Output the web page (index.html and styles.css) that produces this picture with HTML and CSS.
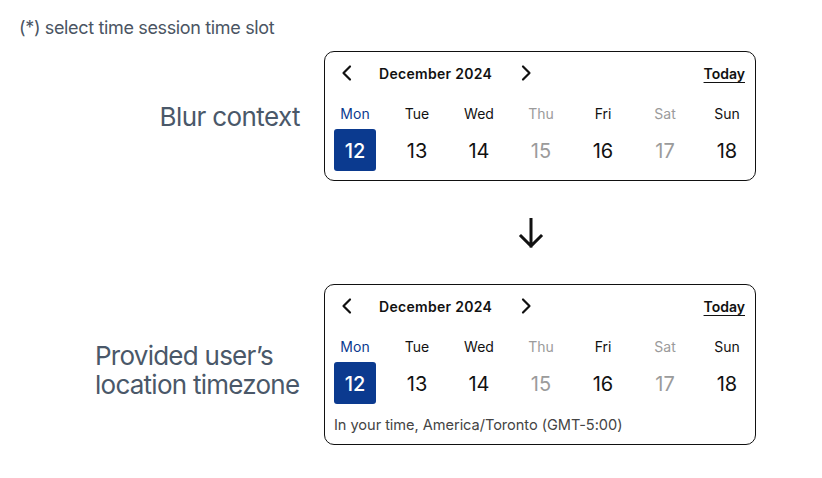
FILE: index.html
```html
<!DOCTYPE html>
<html>
<head>
<meta charset="utf-8">
<link rel="stylesheet" href="styles.css">
</head>
<body>
<div class="page">
  <div class="title">(*) select time session time slot</div>
  <div class="rows">
    <div class="label">Blur context</div>
    <div class="card">
      <div class="head">
        <div class="nav">
          <svg class="chev" width="24" height="24" viewBox="0 0 24 24"><path d="M15 5.5 L8.5 12 L15 18.5"/></svg>
          <span class="month">December 2024</span>
          <svg class="chev" width="24" height="24" viewBox="0 0 24 24"><path d="M9 5.5 L15.5 12 L9 18.5"/></svg>
        </div>
        <span class="today">Today</span>
      </div>
      <div class="grid">
        <div class="dow sel">Mon</div><div class="dow">Tue</div><div class="dow">Wed</div><div class="dow off">Thu</div><div class="dow">Fri</div><div class="dow off">Sat</div><div class="dow">Sun</div>
        <div class="day active">12</div><div class="day">13</div><div class="day">14</div><div class="day off">15</div><div class="day">16</div><div class="day off">17</div><div class="day">18</div>
      </div>
    </div>

    <div class="spacer"></div>
    <div class="arrow-cell">
      <svg class="arrow" width="26" height="30" viewBox="0 0 26 30"><path d="M13 1 V28 M3 18 L13 28 L23 18"/></svg>
    </div>

    <div class="label label-left">Provided user’s<br>location timezone</div>
    <div class="card">
      <div class="head">
        <div class="nav">
          <svg class="chev" width="24" height="24" viewBox="0 0 24 24"><path d="M15 5.5 L8.5 12 L15 18.5"/></svg>
          <span class="month">December 2024</span>
          <svg class="chev" width="24" height="24" viewBox="0 0 24 24"><path d="M9 5.5 L15.5 12 L9 18.5"/></svg>
        </div>
        <span class="today">Today</span>
      </div>
      <div class="grid">
        <div class="dow sel">Mon</div><div class="dow">Tue</div><div class="dow">Wed</div><div class="dow off">Thu</div><div class="dow">Fri</div><div class="dow off">Sat</div><div class="dow">Sun</div>
        <div class="day active">12</div><div class="day">13</div><div class="day">14</div><div class="day off">15</div><div class="day">16</div><div class="day off">17</div><div class="day">18</div>
      </div>
      <div class="tz">In your time, America/Toronto (GMT-5:00)</div>
    </div>
  </div>
</div>
</body>
</html>
```

FILE: styles.css
```css
* { box-sizing: border-box; }
html, body { margin: 0; padding: 0; background: #fff; }
body { font-family: Inter, "Noto Sans", sans-serif; color: #111; }
.page { width: 822px; height: 478px; padding-top: 16px; }
.title {
  margin-left: 19px;
  font-size: 18px;
  line-height: 24px;
  color: #4b5563;
  letter-spacing: -0.35px;
}
.rows {
  margin-top: 11px;
  display: grid;
  grid-template-columns: 300px 432px;
  column-gap: 24px;
  align-items: center;
}
.label {
  text-align: right;
  font-size: 26px;
  line-height: 29px;
  color: #4a5869;
  letter-spacing: -0.6px;
}
.label-left { text-align: left; padding-left: 95px; padding-top: 10px; white-space: nowrap; letter-spacing: -0.75px; }
.card {
  border: 1px solid #111;
  border-radius: 10px;
  padding: 9px 10px 9px 9px;
}
.head {
  display: flex;
  align-items: center;
  justify-content: space-between;
  height: 24px;
}
.nav { display: flex; align-items: center; }
.chev { display: block; margin-left: 1px; }
.chev path { fill: none; stroke: #111; stroke-width: 2.2; stroke-linecap: round; stroke-linejoin: round; }
.month {
  font-size: 14px;
  font-weight: 600;
  margin: 0 21px 0 20px;
  letter-spacing: 0.3px;
}
.today {
  font-size: 14px;
  font-weight: 600;
  text-decoration: underline;
  text-underline-offset: 3px;
  text-decoration-thickness: 1px;
}
.grid {
  margin-top: 18px;
  display: grid;
  grid-template-columns: repeat(7, 42px);
  column-gap: 20px;
  row-gap: 6px;
}
.dow {
  text-align: center;
  font-size: 14px;
  line-height: 20px;
  padding-top: 1px;
  height: 20px;
  color: #111;
}
.dow.sel { color: #0b3a8f; }
.off { color: #9b9b9b !important; }
.day {
  height: 42px;
  display: flex;
  align-items: center;
  justify-content: center;
  font-size: 20px;
  padding-top: 2px;
  color: #111;
}
.day.active {
  background: #0b3a8f;
  color: #fff;
  border-radius: 3px;
  font-weight: 500;
}
.spacer { height: 103px; }
.arrow-cell { height: 103px; display: flex; align-items: center; padding-left: 194px; }
.arrow path { fill: none; stroke: #111; stroke-width: 3; stroke-linecap: square; }
.tz {
  margin-top: 11px;
  font-size: 14.6px;
  line-height: 20px;
  color: #444;
  letter-spacing: -0.05px;
}
```
